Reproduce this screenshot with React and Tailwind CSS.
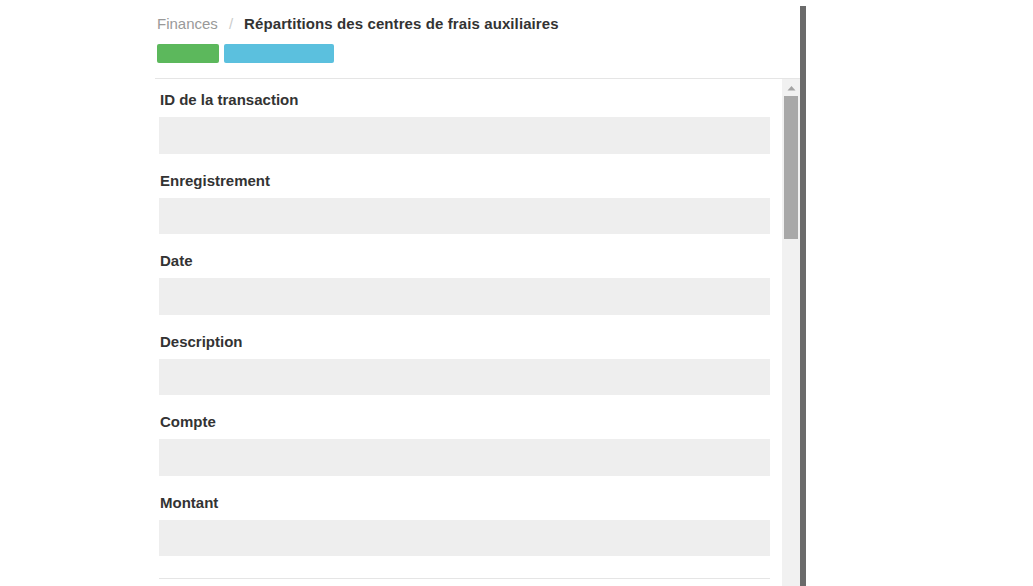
import React from "react";

const fields = ["ID de la transaction", "Enregistrement", "Date", "Description", "Compte", "Montant"];

function Field({ label }) {
  return (
    <div className="mb-[19px]">
      <div className="h-[17px] pl-[1px] text-[15px] leading-[16px] font-bold text-[#333]">{label}</div>
      <div className="mt-[8px] h-[36.5px] w-[611px] bg-[#eeeeee]" />
    </div>
  );
}

export default function App() {
  return (
    <div className="w-[1033px] h-[586px] bg-white overflow-hidden flex font-['Liberation_Sans',Arial,sans-serif]">
      <div className="w-[155px] shrink-0" />

      <div className="w-[645px] shrink-0 flex flex-col">
        {/* Header */}
        <div className="pl-[2px] pt-[14px] h-[79px] border-b border-[#e5e5e5]">
          <div className="flex items-center text-[15px] leading-[20px]">
            <span className="text-[#999]">Finances</span>
            <span className="mx-[11px] text-[#ccc]">/</span>
            <span className="font-bold text-[#333] tracking-[0.1px]">Répartitions des centres de frais auxiliaires</span>
          </div>
          <div className="mt-[10px] flex gap-[5px]">
            <button className="w-[62px] h-[19px] rounded-[2px] bg-[#5cb85c]" />
            <button className="w-[110px] h-[19px] rounded-[2px] bg-[#5bc0de]" />
          </div>
        </div>

        {/* Scroll area */}
        <div className="flex flex-1 min-h-0">
          <div className="flex-1 pl-[4px] pt-[13px] overflow-hidden">
            {fields.map((f) => (
              <Field key={f} label={f} />
            ))}
            <div className="mt-[3px] pt-[3px] w-[611px]">
              <div className="border-t border-[#e5e5e5]" />
            </div>
          </div>
          <div className="w-[18px] shrink-0 bg-[#f1f1f1] flex flex-col items-center pt-[6px]">
            <svg width="9" height="6" viewBox="0 0 9 6">
              <path d="M0.5 5.5 L4.5 1 L8.5 5.5 Z" fill="#a3a3a3" />
            </svg>
            <div className="mt-[5px] w-[14px] h-[143px] bg-[#a8a8a8]" />
          </div>
        </div>
      </div>

      <div className="w-[6px] shrink-0 mt-[6px] bg-[#6b6b6b]" />
    </div>
  );
}
